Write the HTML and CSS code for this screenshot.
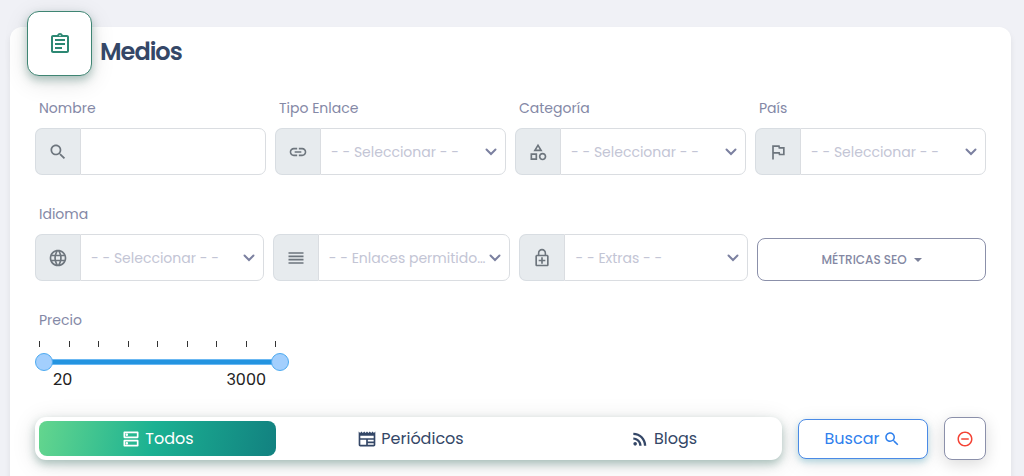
FILE: index.html
```html
<!DOCTYPE html>
<html lang="es">
<head>
  <meta charset="UTF-8" />
  <title>Medios</title>
  <meta name="viewport" content="width=device-width, initial-scale=1.0" />
  <link rel="stylesheet" href="styles.css">
</head>
<body>

  <main class="card">
    <header class="card-header">
      <div class="header-icon">
        <svg class="icon" viewBox="0 0 24 24"><path d="M7 15h7v2H7zm0-4h10v2H7zm0-4h10v2H7zm12-4h-4.18C14.4 1.84 13.3 1 12 1c-1.3 0-2.4.84-2.82 2H5c-1.1 0-2 .9-2 2v14c0 1.1.9 2 2 2h14c1.1 0 2-.9 2-2V5c0-1.1-.9-2-2-2zm-7-.25c.41 0 .75.34.75.75s-.34.75-.75.75-.75-.34-.75-.75.34-.75.75-.75zM19 19H5V5h14v14z"/></svg>
      </div>
      <h1>Medios</h1>
    </header>

    <form class="filters" onsubmit="return false">
      <div class="row">
        <div class="field">
          <label for="nombre">Nombre</label>
          <div class="input-group">
            <span class="addon"><svg class="icon" viewBox="0 0 24 24"><path d="M15.5 14h-.79l-.28-.27C15.41 12.59 16 11.11 16 9.5 16 5.91 13.09 3 9.5 3S3 5.91 3 9.5 5.91 16 9.5 16c1.61 0 3.09-.59 4.23-1.57l.27.28v.79l5 4.99L20.49 19l-4.99-5zm-6 0C7.01 14 5 11.99 5 9.5S7.01 5 9.5 5 14 7.01 14 9.5 11.99 14 9.5 14z"/></svg></span>
            <input type="text" id="nombre" class="control" />
          </div>
        </div>
        <div class="field">
          <label for="tipo">Tipo Enlace</label>
          <div class="input-group">
            <span class="addon"><svg class="icon" viewBox="0 0 24 24"><path d="M3.9 12c0-1.71 1.39-3.1 3.1-3.1h4V7H7c-2.76 0-5 2.24-5 5s2.24 5 5 5h4v-1.9H7c-1.71 0-3.1-1.39-3.1-3.1zM8 13h8v-2H8v2zm9-6h-4v1.9h4c1.71 0 3.1 1.39 3.1 3.1s-1.39 3.1-3.1 3.1h-4V17h4c2.76 0 5-2.24 5-5s-2.24-5-5-5z"/></svg></span>
            <select id="tipo" class="control"><option>- - Seleccionar - -</option></select>
          </div>
        </div>
        <div class="field">
          <label for="categoria">Categoría</label>
          <div class="input-group">
            <span class="addon"><svg class="icon" viewBox="0 0 24 24"><path d="M12 2l-5.5 9h11L12 2zm0 3.84L13.93 9h-3.87L12 5.84zM17.5 13c-2.49 0-4.5 2.01-4.5 4.5s2.01 4.5 4.5 4.5 4.5-2.01 4.5-4.5-2.01-4.5-4.5-4.5zm0 7c-1.38 0-2.5-1.12-2.5-2.5s1.12-2.5 2.5-2.5 2.5 1.12 2.5 2.5-1.12 2.5-2.5 2.5zM3 21.5h8v-8H3v8zm2-6h4v4H5v-4z"/></svg></span>
            <select id="categoria" class="control"><option>- - Seleccionar - -</option></select>
          </div>
        </div>
        <div class="field">
          <label for="pais">País</label>
          <div class="input-group">
            <span class="addon"><svg class="icon" viewBox="0 0 24 24"><path d="M12.36 6l.4 2H18v6h-3.36l-.4-2H7V6h5.36M14 4H5v17h2v-7h5.6l.4 2h7V6h-5.6L14 4z"/></svg></span>
            <select id="pais" class="control"><option>- - Seleccionar - -</option></select>
          </div>
        </div>
      </div>

      <div class="row row-extra">
        <div class="field">
          <label for="idioma">Idioma</label>
          <div class="input-group">
            <span class="addon"><svg class="icon" viewBox="0 0 24 24"><path d="M11.99 2C6.47 2 2 6.48 2 12s4.47 10 9.99 10C17.52 22 22 17.52 22 12S17.52 2 11.99 2zm6.93 6h-2.95c-.32-1.25-.78-2.45-1.38-3.56 1.84.63 3.37 1.91 4.33 3.56zM12 4.04c.83 1.2 1.48 2.53 1.91 3.96h-3.82c.43-1.43 1.08-2.76 1.91-3.96zM4.26 14C4.1 13.36 4 12.69 4 12s.1-1.36.26-2h3.38c-.08.66-.14 1.32-.14 2s.06 1.34.14 2H4.26zm.82 2h2.95c.32 1.25.78 2.45 1.38 3.56-1.84-.63-3.37-1.9-4.33-3.56zm2.95-8H5.08c.96-1.66 2.49-2.93 4.33-3.56C8.81 5.55 8.35 6.75 8.03 8zM12 19.96c-.83-1.2-1.48-2.53-1.91-3.96h3.82c-.43 1.43-1.08 2.76-1.91 3.96zM14.34 14H9.66c-.09-.66-.16-1.32-.16-2s.07-1.35.16-2h4.68c.09.65.16 1.32.16 2s-.07 1.34-.16 2zm.25 5.56c.6-1.11 1.06-2.31 1.38-3.56h2.95c-.96 1.65-2.49 2.93-4.33 3.56zM16.36 14c.08-.66.14-1.32.14-2s-.06-1.34-.14-2h3.38c.16.64.26 1.31.26 2s-.1 1.36-.26 2h-3.38z"/></svg></span>
            <select id="idioma" class="control"><option>- - Seleccionar - -</option></select>
          </div>
        </div>
        <div class="input-group">
          <span class="addon"><svg class="icon" viewBox="0 0 24 24"><path d="M3 15h18v-2H3v2zm0 4h18v-2H3v2zm0-8h18V9H3v2zm0-6v2h18V5H3z"/></svg></span>
          <select class="control" aria-label="Enlaces permitidos"><option>- - Enlaces permitidos - -</option></select>
        </div>
        <div class="input-group">
          <span class="addon"><svg class="icon" viewBox="0 0 24 24"><path d="M18 8h-1V6c0-2.76-2.24-5-5-5S7 3.24 7 6v2H6c-1.1 0-2 .9-2 2v10c0 1.1.9 2 2 2h12c1.1 0 2-.9 2-2V10c0-1.1-.9-2-2-2zM8.9 6c0-1.71 1.39-3.1 3.1-3.1s3.1 1.39 3.1 3.1v2H8.9V6zM18 20H6V10h12v10zm-7-1h2v-3h3v-2h-3v-3h-2v3H8v2h3z"/></svg></span>
          <select class="control" aria-label="Extras"><option>- - Extras - -</option></select>
        </div>
        <button type="button" class="btn-metrics">MÉTRICAS SEO <span class="caret"></span></button>
      </div>

      <div class="price">
        <label for="precioMin">Precio</label>
        <div class="ticks">
          <i></i><i></i><i></i><i></i><i></i><i></i><i></i><i></i><i></i>
        </div>
        <div class="slider">
          <div class="track"></div>
          <input type="range" id="precioMin" min="20" max="3000" value="20" />
          <input type="range" id="precioMax" min="20" max="3000" value="3000" aria-label="Precio máximo" />
        </div>
        <div class="price-values">
          <output id="minValue">20</output>
          <output id="maxValue">3000</output>
        </div>
      </div>

      <div class="actions">
        <div class="tabs">
          <button type="button" class="tab active">
            <svg class="icon" viewBox="0 0 24 24"><path d="M19 15v4H5v-4h14m1-2H4c-.55 0-1 .45-1 1v6c0 .55.45 1 1 1h16c.55 0 1-.45 1-1v-6c0-.55-.45-1-1-1zM7 18.5a1.5 1.5 0 1 1 0-3 1.5 1.5 0 0 1 0 3zM19 5v4H5V5h14m1-2H4c-.55 0-1 .45-1 1v6c0 .55.45 1 1 1h16c.55 0 1-.45 1-1V4c0-.55-.45-1-1-1zM7 8.5a1.5 1.5 0 1 1 0-3 1.5 1.5 0 0 1 0 3z"/></svg>
            Todos
          </button>
          <button type="button" class="tab">
            <svg class="icon" viewBox="0 0 24 24"><path d="M22 3l-1.67 1.67L18.67 3 17 4.67 15.33 3l-1.66 1.67L12 3l-1.67 1.67L8.67 3 7 4.67 5.33 3 3.67 4.67 2 3v16c0 1.1.9 2 2 2h16c1.1 0 2-.9 2-2V3zM11 19H4v-6h7v6zm9 0h-7v-2h7v2zm0-4h-7v-2h7v2zm0-4H4V8h16v3z"/></svg>
            Periódicos
          </button>
          <button type="button" class="tab">
            <svg class="icon" viewBox="0 0 24 24"><circle cx="6.18" cy="17.82" r="2.18"/><path d="M4 4.44v2.83c7.03 0 12.73 5.7 12.73 12.73h2.83c0-8.59-6.97-15.56-15.56-15.56zm0 5.66v2.83c3.9 0 7.07 3.17 7.07 7.07h2.83c0-5.47-4.43-9.9-9.9-9.9z"/></svg>
            Blogs
          </button>
        </div>
        <button type="submit" class="btn-search">
          Buscar
          <svg class="icon" viewBox="0 0 24 24"><path d="M15.5 14h-.79l-.28-.27C15.41 12.59 16 11.11 16 9.5 16 5.91 13.09 3 9.5 3S3 5.91 3 9.5 5.91 16 9.5 16c1.61 0 3.09-.59 4.23-1.57l.27.28v.79l5 4.99L20.49 19l-4.99-5zm-6 0C7.01 14 5 11.99 5 9.5S7.01 5 9.5 5 14 7.01 14 9.5 11.99 14 9.5 14z"/></svg>
        </button>
        <button type="reset" class="btn-reset" aria-label="Limpiar">
          <svg class="icon" viewBox="0 0 24 24"><path d="M7 11v2h10v-2H7zm5-9C6.48 2 2 6.48 2 12s4.48 10 10 10 10-4.48 10-10S17.52 2 12 2zm0 18c-4.41 0-8-3.59-8-8s3.59-8 8-8 8 3.59 8 8-3.59 8-8 8z"/></svg>
        </button>
      </div>
    </form>
  </main>

  <script>
    const minInput = document.getElementById("precioMin");
    const maxInput = document.getElementById("precioMax");

    minInput.addEventListener("input", () => {
      document.getElementById("minValue").textContent = minInput.value;
    });
    maxInput.addEventListener("input", () => {
      document.getElementById("maxValue").textContent = maxInput.value;
    });

    document.querySelectorAll(".tab").forEach(tab => {
      tab.addEventListener("click", () => {
        document.querySelector(".tab.active").classList.remove("active");
        tab.classList.add("active");
      });
    });
  </script>
</body>
</html>
```
FILE: styles.css
```css
* {
  box-sizing: border-box;
}

body {
  margin: 0;
  padding: 27px 13px 0 10px;
  font-family: Poppins, Inter, "Open Sans", sans-serif;
  font-size: 14px;
  background: #f0f1f6;
  color: #344767;
}

button, input, select {
  font-family: inherit;
}

button {
  cursor: pointer;
}

.icon {
  width: 20px;
  height: 20px;
  fill: currentColor;
  flex: none;
}

.card {
  min-height: calc(100vh - 27px);
  padding: 0 25px 15px;
  background: #fff;
  border-radius: 12px 12px 0 0;
  box-shadow: 0 4px 6px rgba(0,0,0,0.08);
}

.card-header {
  display: flex;
  align-items: flex-start;
  gap: 8px;
  margin: 0 -8px 20px;
}

.header-icon {
  display: flex;
  align-items: center;
  justify-content: center;
  width: 65px;
  height: 65px;
  margin-top: -16px;
  background: #fff;
  border: 1px solid #3f8573;
  border-radius: 12px;
  color: #2d8873;
  box-shadow: 0 4px 8px rgba(45,110,95,0.35), 0 6px 24px rgba(0,0,0,0.12);
}

.header-icon .icon {
  width: 24px;
  height: 24px;
}

h1 {
  margin: 9px 0 0;
  font-size: 24px;
  line-height: 32px;
  font-weight: 600;
  letter-spacing: -1px;
}

.row {
  display: grid;
  grid-template-columns: repeat(4, minmax(0, 1fr));
  gap: 9px;
  align-items: end;
  margin-bottom: 27px;
}

.row-extra {
  grid-template-columns: 229fr 238fr 229fr 229fr;
}

label {
  display: block;
  padding-left: 4px;
  line-height: 24px;
  color: #8488a6;
}

.field label {
  margin-bottom: 8px;
}

.input-group {
  display: flex;
  height: 47px;
  min-width: 0;
}

.addon {
  display: flex;
  align-items: center;
  justify-content: center;
  flex: 0 0 45px;
  background: #e7ebee;
  border: 1px solid #d8dde2;
  border-right: none;
  border-radius: 7px 0 0 7px;
  color: #6d757d;
}

.control {
  flex: 1;
  min-width: 0;
  padding: 0 22px 0 10px;
  border: 1px solid #dadde1;
  border-radius: 0 7px 7px 0;
  background-color: #fff;
  color: #c3c5d5;
  font-size: 14px;
}

input.control {
  color: #344767;
}

select.control {
  appearance: none;
  text-overflow: ellipsis;
  background-image: url("data:image/svg+xml,%3Csvg xmlns='http://www.w3.org/2000/svg' viewBox='0 0 12 8'%3E%3Cpath d='M1.5 1.5L6 6l4.5-4.5' fill='none' stroke='%237b80a0' stroke-width='2' stroke-linecap='round'/%3E%3C/svg%3E");
  background-repeat: no-repeat;
  background-size: 12px 8px;
  background-position: right 8px center;
}

.btn-metrics {
  display: flex;
  align-items: center;
  justify-content: center;
  gap: 7px;
  height: 43px;
  background: #fff;
  border: 1px solid #8b90aa;
  border-radius: 8px;
  color: #8488a3;
  font-size: 12px;
  font-weight: 500;
}

.caret {
  border: 4px solid transparent;
  border-top-color: #7b8099;
  border-bottom: none;
}

.price {
  max-width: 254px;
}

.ticks {
  display: flex;
  justify-content: space-between;
  padding: 0 13px 0 4px;
  margin-top: 9px;
}

.ticks i {
  width: 1px;
  height: 6px;
  background: #333;
}

/* both range inputs share one cell so the handles run on one track */
.slider {
  display: grid;
  align-items: center;
  margin-top: 6px;
}

.slider > * {
  grid-area: 1 / 1;
}

.track {
  height: 6px;
  margin: 0 8px;
  background: #2494e0;
  border: 1px solid #6bb8f2;
}

.slider input {
  appearance: none;
  width: 100%;
  height: 18px;
  margin: 0;
  background: transparent;
  pointer-events: none;
}

.slider input::-webkit-slider-thumb {
  appearance: none;
  width: 18px;
  height: 18px;
  background: #a3cffd;
  border: 1px solid #4daaf0;
  border-radius: 50%;
  pointer-events: auto;
}

.price-values {
  display: flex;
  justify-content: space-between;
  padding: 0 23px 0 18px;
  font-size: 16px;
  line-height: 18px;
  color: #222;
}

.actions {
  display: flex;
  align-items: center;
  margin-top: 28px;
}

.tabs {
  display: grid;
  grid-template-columns: repeat(3, 1fr);
  gap: 16px;
  flex: 1;
  padding: 4px 0 4px 4px;
  margin-right: 16px;
  background: #fff;
  border-radius: 11px;
  box-shadow: 0 4px 8px rgba(45,110,95,0.35), 0 4px 24px rgba(0,0,0,0.12);
}

.tab {
  display: flex;
  align-items: center;
  justify-content: center;
  gap: 4px;
  height: 35px;
  padding: 0;
  border: none;
  border-radius: 8px;
  background: transparent;
  color: #344767;
  font-size: 16px;
}

.tab.active {
  background: linear-gradient(100deg, #64d68e 0%, #1bb192 48%, #128180 100%);
  color: #fff;
}

.btn-search {
  display: flex;
  align-items: center;
  justify-content: center;
  gap: 4px;
  width: 130px;
  height: 40px;
  margin-right: 16px;
  background: #fff;
  border: 1px solid #4a8ae6;
  border-radius: 8px;
  color: #2f80ed;
  font-size: 16px;
  box-shadow: 0 3px 6px rgba(40,150,180,0.3), 0 4px 20px rgba(0,0,0,0.1);
}

.btn-search .icon,
.btn-reset .icon {
  width: 18px;
  height: 18px;
}

.btn-reset {
  display: flex;
  align-items: center;
  justify-content: center;
  width: 42px;
  height: 43px;
  padding: 0;
  background: #fff;
  border: 1px solid #8b90aa;
  border-radius: 8px;
  color: #f44335;
  box-shadow: 0 4px 16px rgba(0,0,0,0.15);
}
```
